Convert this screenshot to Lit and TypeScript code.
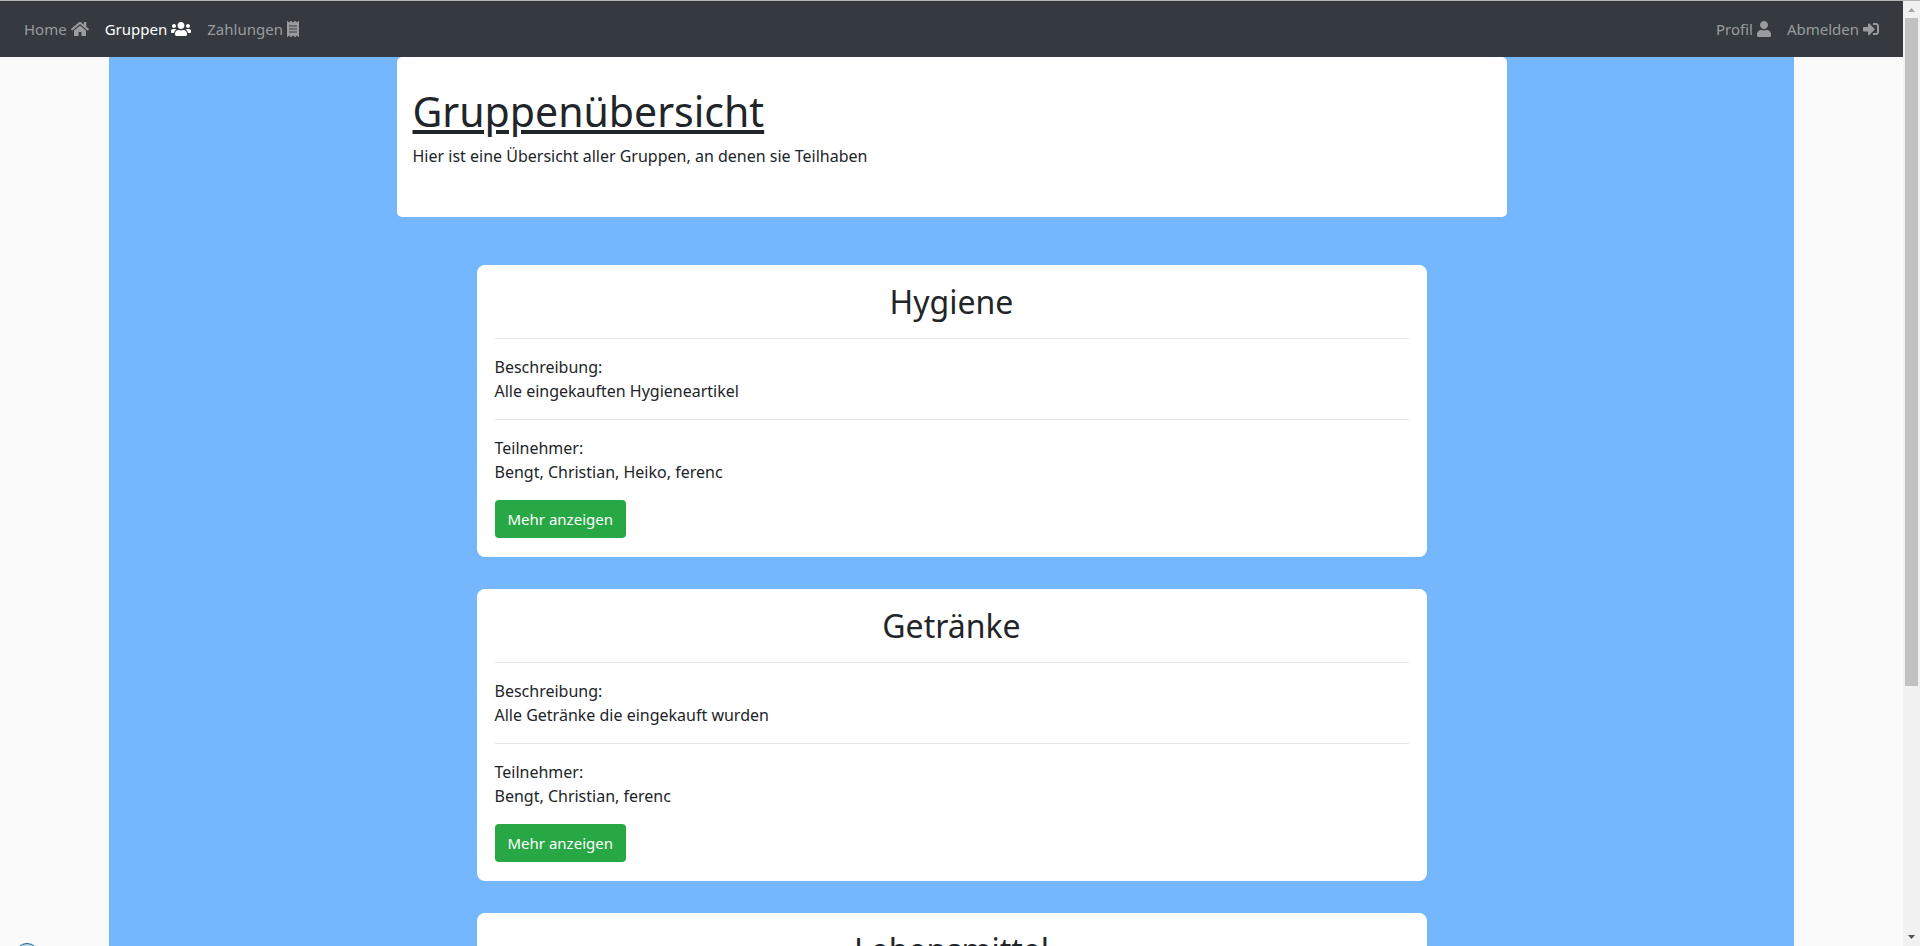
import { LitElement, html, css, svg, nothing } from "lit";
import { customElement, property } from "lit/decorators.js";

interface IconShape {
  width: number;
  path: string;
}

const ICONS: Record<string, IconShape> = {
  home: {
    width: 576,
    path: "M280.37 148.26L96 300.11V464a16 16 0 0 0 16 16l112.06-.29a16 16 0 0 0 15.92-16V368a16 16 0 0 1 16-16h64a16 16 0 0 1 16 16v95.64a16 16 0 0 0 16 16.05L464 480a16 16 0 0 0 16-16V300L295.67 148.26a12.19 12.19 0 0 0-15.3 0zM571.6 251.47L488 182.56V44.05a12 12 0 0 0-12-12h-56a12 12 0 0 0-12 12v72.61L318.47 43a48 48 0 0 0-61 0L4.34 251.47a12 12 0 0 0-1.6 16.9l25.5 31A12 12 0 0 0 45.15 301l235.22-193.74a12.19 12.19 0 0 1 15.3 0L530.9 301a12 12 0 0 0 16.9-1.6l25.5-31a12 12 0 0 0-1.7-16.93z",
  },
  users: {
    width: 640,
    path: "M96 224c35.3 0 64-28.7 64-64s-28.7-64-64-64-64 28.7-64 64 28.7 64 64 64zm448 0c35.3 0 64-28.7 64-64s-28.7-64-64-64-64 28.7-64 64 28.7 64 64 64zm32 32h-64c-17.6 0-33.5 7.1-45.1 18.6 40.3 22.1 68.9 62 75.1 109.4h66c17.7 0 32-14.3 32-32v-32c0-35.3-28.7-64-64-64zm-256 0c61.9 0 112-50.1 112-112S381.9 32 320 32 208 82.1 208 144s50.1 112 112 112zm76.8 32h-8.3c-20.8 10-43.9 16-68.5 16s-47.6-6-68.5-16h-8.3C179.6 288 128 339.6 128 403.2V432c0 26.5 21.5 48 48 48h288c26.5 0 48-21.5 48-48v-28.8c0-63.6-51.6-115.2-115.2-115.2zm-223.7-13.4C161.5 263.1 145.6 256 128 256H64c-35.3 0-64 28.7-64 64v32c0 17.7 14.3 32 32 32h65.9c6.3-47.4 34.9-87.3 75.2-109.4z",
  },
  receipt: {
    width: 384,
    path: "M358.4 3.2L320 48 265.6 3.2a15.9 15.9 0 0 0-19.2 0L192 48 137.6 3.2a15.9 15.9 0 0 0-19.2 0L64 48 25.6 3.2C15-4.7 0 2.8 0 16v480c0 13.2 15 20.7 25.6 12.8L64 464l54.4 44.8a15.9 15.9 0 0 0 19.2 0L192 464l54.4 44.8a15.9 15.9 0 0 0 19.2 0L320 464l38.4 44.8c10.5 7.9 25.6.4 25.6-12.8V16c0-13.2-15-20.7-25.6-12.8zM320 360c0 4.4-3.6 8-8 8H72c-4.4 0-8-3.6-8-8v-16c0-4.4 3.6-8 8-8h240c4.4 0 8 3.6 8 8v16zm0-96c0 4.4-3.6 8-8 8H72c-4.4 0-8-3.6-8-8v-16c0-4.4 3.6-8 8-8h240c4.4 0 8 3.6 8 8v16zm0-96c0 4.4-3.6 8-8 8H72c-4.4 0-8-3.6-8-8v-16c0-4.4 3.6-8 8-8h240c4.4 0 8 3.6 8 8v16z",
  },
  user: {
    width: 448,
    path: "M224 256c70.7 0 128-57.3 128-128S294.7 0 224 0 96 57.3 96 128s57.3 128 128 128zm89.6 32h-16.7c-22.2 10.2-46.9 16-72.9 16s-50.6-5.8-72.9-16h-16.7C60.2 288 0 348.2 0 422.4V464c0 26.5 21.5 48 48 48h352c26.5 0 48-21.5 48-48v-41.6c0-74.2-60.2-134.4-134.4-134.4z",
  },
  signIn: {
    width: 512,
    path: "M416 448h-84c-6.6 0-12-5.4-12-12v-40c0-6.6 5.4-12 12-12h84c17.7 0 32-14.3 32-32V160c0-17.7-14.3-32-32-32h-84c-6.6 0-12-5.4-12-12V76c0-6.6 5.4-12 12-12h84c53 0 96 43 96 96v192c0 53-43 96-96 96zm-47-201L201 79c-15-15-41-4.500-41 17v96H24c-13.3 0-24 10.7-24 24v96c0 13.3 10.7 24 24 24h136v96c0 21.5 26 32 41 17l168-168c9.3-9.4 9.3-24.6 0-34z",
  },
};

interface Group {
  name: string;
  description?: string;
  members?: string[];
}

const GROUPS: Group[] = [
  {
    name: "Hygiene",
    description: "Alle eingekauften Hygieneartikel",
    members: ["Bengt", "Christian", "Heiko", "ferenc"],
  },
  {
    name: "Getränke",
    description: "Alle Getränke die eingekauft wurden",
    members: ["Bengt", "Christian", "ferenc"],
  },
  { name: "Lebensmittel" },
];

@customElement("nav-link")
class NavLink extends LitElement {
  @property() label = "";
  @property() icon = "";
  @property({ type: Boolean }) active = false;

  static styles = css`
    :host {
      display: block;
    }
    .link {
      display: flex;
      align-items: center;
      gap: 4px;
      padding: 8px;
      color: #999c9f;
      font: 15px/24px "Noto Sans", sans-serif;
      text-decoration: none;
    }
    .active {
      color: #fff;
    }
    .icon {
      display: block;
      height: 16px;
      fill: currentColor;
    }
  `;

  render() {
    const shape = ICONS[this.icon];
    return html`<a class="link ${this.active ? "active" : ""}" href="#">
      <span>${this.label}</span>
      <svg class="icon" viewBox="0 0 ${shape.width} 512" aria-hidden="true">
        ${svg`<path d=${shape.path}></path>`}
      </svg>
    </a>`;
  }
}

@customElement("group-card")
class GroupCard extends LitElement {
  @property({ attribute: false }) group: Group = { name: "" };

  static styles = css`
    :host {
      display: block;
      box-sizing: border-box;
      width: 100%;
      max-width: 950px;
      padding: 18px 18px 19px;
      border-radius: 8px;
      background: #fff;
    }
    .name {
      margin: 0;
      padding-bottom: 2px;
      font-size: 32px;
      font-weight: 400;
      line-height: 37px;
      text-align: center;
    }
    .rule {
      height: 0;
      margin: 16px 0;
      border: 0;
      border-top: 1px solid #e5e5e5;
    }
    .text {
      margin: 0 0 16px;
    }
    .more {
      display: block;
      height: 38px;
      padding: 0 13px;
      border: 0;
      border-radius: 4px;
      background: #28a745;
      color: #fff;
      font: 15px/24px "Noto Sans", sans-serif;
    }
  `;

  render() {
    const { name, description, members } = this.group;
    return html`
      <h2 class="name">${name}</h2>
      <hr class="rule" />
      ${description
        ? html`<p class="text">Beschreibung:<br />${description}</p>
            <hr class="rule" />`
        : nothing}
      ${members
        ? html`<p class="text">Teilnehmer:<br />${members.join(", ")}</p>
            <button class="more" type="button">Mehr anzeigen</button>`
        : nothing}
    `;
  }
}

@customElement("app-root")
class AppRoot extends LitElement {
  static styles = css`
    :host {
      display: grid;
      grid-template-columns: minmax(0, 1fr) 17px;
      box-sizing: border-box;
      height: 100vh;
      position: relative;
      overflow: hidden;
      border-top: 1px solid #b4b4b4;
      background: #fafafa;
      color: #212529;
      font: 16px/24px "Noto Sans", sans-serif;
    }
    .page {
      display: flex;
      flex-direction: column;
      min-height: 0;
      overflow: hidden;
    }
    .navbar {
      display: flex;
      flex: none;
      justify-content: space-between;
      padding: 8px 16px;
      background: #343a40;
    }
    .links {
      display: flex;
    }
    .content {
      display: flex;
      flex: 1 0 auto;
      flex-direction: column;
      align-items: center;
      margin: 0 109px;
      background: #74b7ff;
    }
    .intro {
      box-sizing: border-box;
      width: 100%;
      max-width: 1110px;
      margin-bottom: 48px;
      padding: 30px 16px 49px;
      border-radius: 5px;
      background: #fff;
    }
    .title {
      margin: 0 0 9px;
      font-size: 41px;
      font-weight: 400;
      line-height: 48px;
      text-decoration: underline;
    }
    .lead {
      margin: 0;
    }
    .groups {
      display: flex;
      flex-direction: column;
      align-items: center;
      gap: 32px;
      width: 100%;
    }
    .scrollbar {
      display: flex;
      flex-direction: column;
      align-items: center;
      background: #f1f1f1;
    }
    .arrow {
      display: block;
      width: 17px;
      height: 17px;
      fill: #a3a3a3;
    }
    .down {
      fill: #505050;
    }
    .thumb {
      flex: 11;
      width: 13px;
      background: #c1c1c1;
    }
    .track {
      flex: 4;
    }
    .corner {
      position: absolute;
      bottom: -21px;
      left: 15px;
      box-sizing: border-box;
      width: 24px;
      height: 24px;
      border: 1px solid #1f5a86;
      border-radius: 50%;
      background: #b9dcec;
    }
  `;

  render() {
    return html`
      <div class="page">
        <nav class="navbar">
          <div class="links">
            <nav-link label="Home" icon="home"></nav-link>
            <nav-link label="Gruppen" icon="users" active></nav-link>
            <nav-link label="Zahlungen" icon="receipt"></nav-link>
          </div>
          <div class="links">
            <nav-link label="Profil" icon="user"></nav-link>
            <nav-link label="Abmelden" icon="signIn"></nav-link>
          </div>
        </nav>
        <main class="content">
          <header class="intro">
            <h1 class="title">Gruppenübersicht</h1>
            <p class="lead">Hier ist eine Übersicht aller Gruppen, an denen sie Teilhaben</p>
          </header>
          <section class="groups">
            ${GROUPS.map((group) => html`<group-card .group=${group}></group-card>`)}
          </section>
        </main>
      </div>
      <div class="scrollbar" aria-hidden="true">
        <svg class="arrow" viewBox="0 0 17 17"><path d="M5 11h7L8.500 7z"></path></svg>
        <div class="thumb"></div>
        <div class="track"></div>
        <svg class="arrow down" viewBox="0 0 17 17"><path d="M5 6h7L8.500 10z"></path></svg>
      </div>
      <div class="corner" aria-hidden="true"></div>
    `;
  }
}
